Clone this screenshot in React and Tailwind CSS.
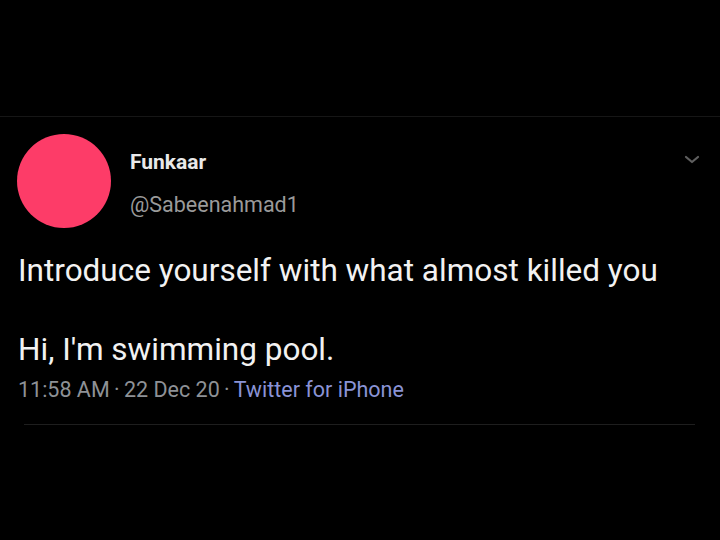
import React from 'react';

const Chevron = () => (
  <svg width="16" height="10" viewBox="0 0 16 10" fill="none">
    <path d="M2 2l6 5 6-5" stroke="#5f5f5f" strokeWidth="2.2" strokeLinecap="round" strokeLinejoin="round" />
  </svg>
);

const App = () => {
  return (
    <div className="w-[720px] h-[540px] bg-black overflow-hidden" style={{ fontFamily: 'Roboto, "Liberation Sans", sans-serif' }}>
      <div className="h-[116px]" />
      <div className="border-t border-[#161616]">
        <div className="flex pt-[17px] pl-[17px] pr-[18px]">
          {/* avatar */}
          <div className="w-[94px] h-[94px] rounded-full bg-[#fd3c68] shrink-0" />
          <div className="flex flex-col pl-[19px] pt-[15px] grow">
            <div className="text-[21px] font-bold text-[#e9e9e9] leading-[26px]">Funkaar</div>
            <div className="text-[21.5px] text-[#9a9a9a] leading-[26px] mt-[17px]">@Sabeenahmad1</div>
          </div>
          <div className="pt-[21px] pr-[2px]">
            <Chevron />
          </div>
        </div>

        <div className="px-[18px] pt-[25px]">
          <p className="text-[31.5px] text-[#f2f2f2] leading-[36px]">Introduce yourself with what almost killed you</p>
          <p className="text-[31.5px] text-[#f2f2f2] leading-[36px] mt-[43px]">Hi, I'm swimming pool.</p>
          <div className="text-[21.5px] leading-[26px] mt-[9px] text-[#8e9196]">
            11:58 AM <span className="mx-[-1px]">·</span> 22 Dec 20 <span className="mx-[-1px]">·</span>{' '}
            <span className="text-[#8a93d6]">Twitter for iPhone</span>
          </div>
        </div>

        <div className="mx-[24px] mt-[21px] w-[671px] border-t border-[#1e1e1e]" />
      </div>
    </div>
  );
};

export default App;
